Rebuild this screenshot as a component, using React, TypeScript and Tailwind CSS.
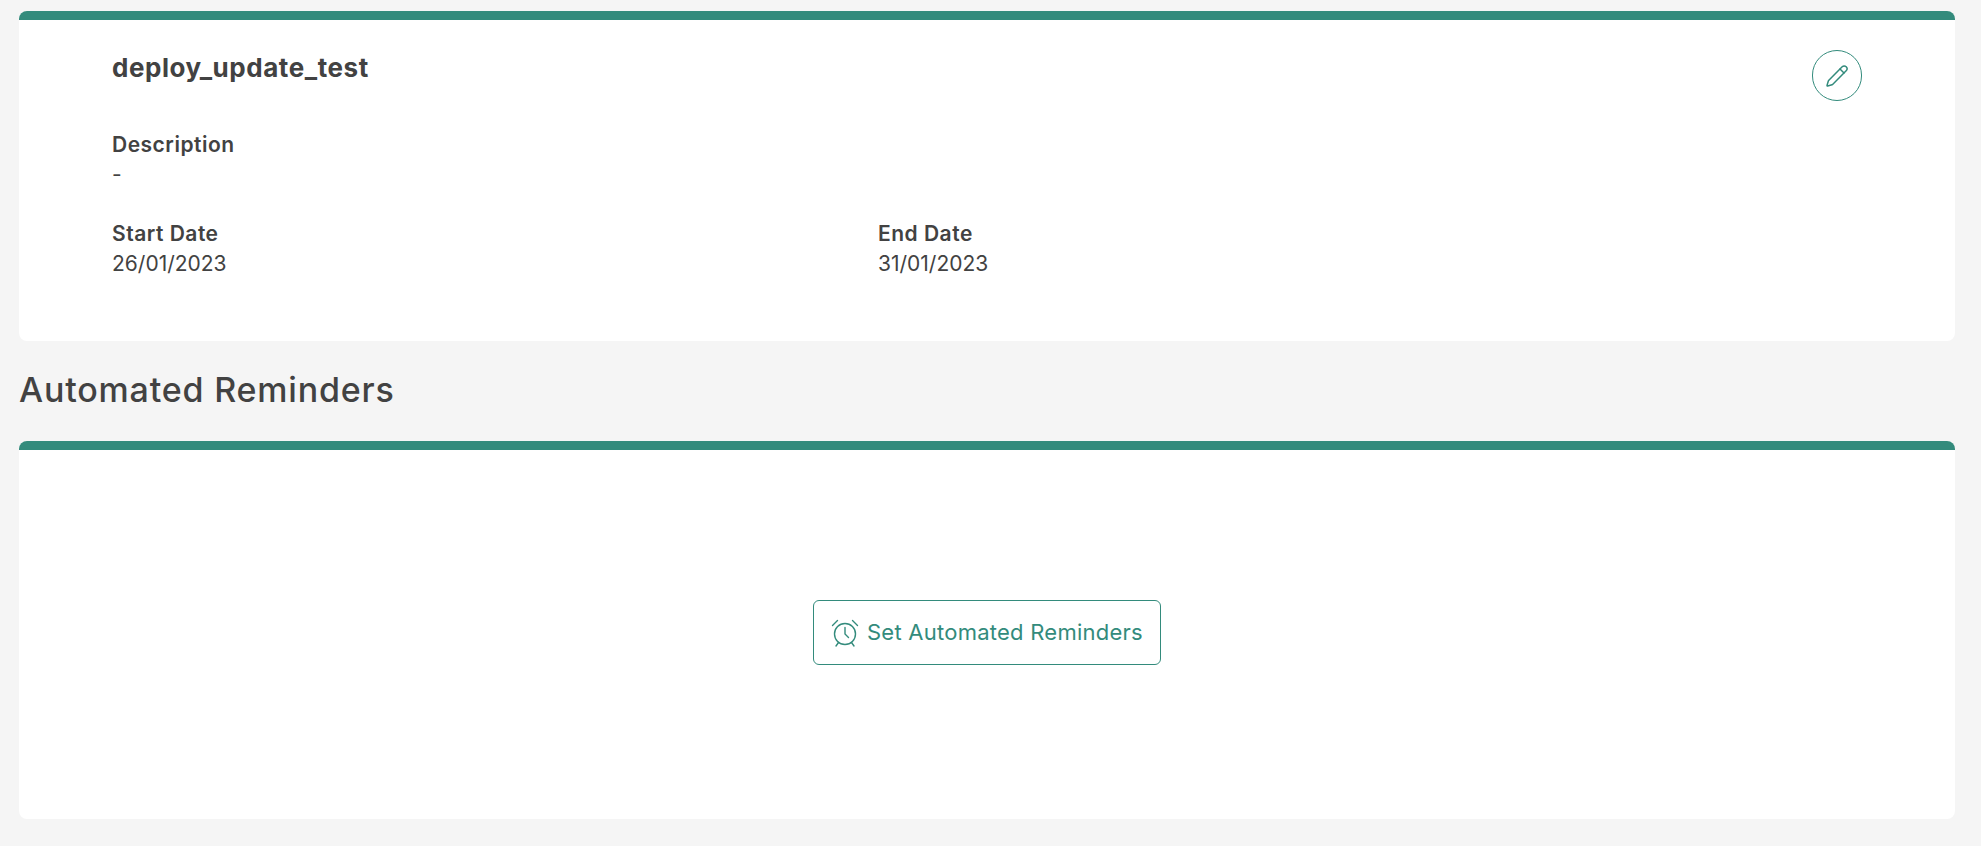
import { Pencil } from "lucide-react";

function Field({ label, value }: { label: string; value: string }) {
  return (
    <div className="flex flex-col">
      <div className="text-[21px] leading-[30px] font-semibold tracking-[0.5px] text-[#424242]">{label}</div>
      <div className="text-[21px] leading-[30px] text-[#424242]">{value}</div>
    </div>
  );
}

function AlarmIcon() {
  return (
    <svg width="28" height="28" viewBox="0 0 28 28" fill="none" stroke="currentColor" strokeWidth="1.4" strokeLinecap="round" strokeLinejoin="round">
      <circle cx="14" cy="15" r="10.5" />
      <path d="M14 8.5V15l3.5 3.5" />
      <path d="M1.5 6.5 6.5 1.5" />
      <path d="M26.5 6.5 21.5 1.5" />
      <path d="M7.5 23.5 5 27" />
      <path d="M20.5 23.5 23 27" />
    </svg>
  );
}

export default function App() {
  return (
    <div className="min-h-[846px] w-[1981px] bg-[#f5f5f5] pt-[11px] pr-[26px] pb-[27px] pl-[19px] font-['Inter',sans-serif]">
      <section className="flex h-[330px] flex-col overflow-hidden rounded-lg bg-white">
        <div className="h-[9px] bg-[#338b7c]" />
        <div className="flex flex-col pt-[30px] pr-[93px] pl-[93px]">
          <div className="flex h-[51px] items-start justify-between">
            <h1 className="text-[26px] leading-[36px] font-bold tracking-[0.55px] text-[#424242]">deploy_update_test</h1>
            <button className="flex h-[51px] w-[50px] items-center justify-center rounded-full border border-[#338b7c] text-[#338b7c]">
              <Pencil size={24} strokeWidth={1.5} />
            </button>
          </div>
          <div className="mt-[29px]">
            <Field label="Description" value="-" />
          </div>
          <div className="mt-[29px] grid grid-cols-[766px_1fr]">
            <Field label="Start Date" value="26/01/2023" />
            <Field label="End Date" value="31/01/2023" />
          </div>
        </div>
      </section>
      <h2 className="mt-[25px] text-[34px] leading-[48px] font-medium tracking-[0.8px] text-[#424242]">Automated Reminders</h2>
      <section className="mt-[27px] flex h-[378px] flex-col overflow-hidden rounded-lg bg-white">
        <div className="h-[9px] bg-[#338b7c]" />
        <div className="flex flex-1 items-start justify-center pt-[150px]">
          <button className="flex h-[65px] w-[348px] items-center justify-center gap-[8px] rounded-md border border-[#338b7c] text-[22px] tracking-[0.25px] text-[#338b7c]">
            <AlarmIcon />
            <span>Set Automated Reminders</span>
          </button>
        </div>
      </section>
    </div>
  );
}
